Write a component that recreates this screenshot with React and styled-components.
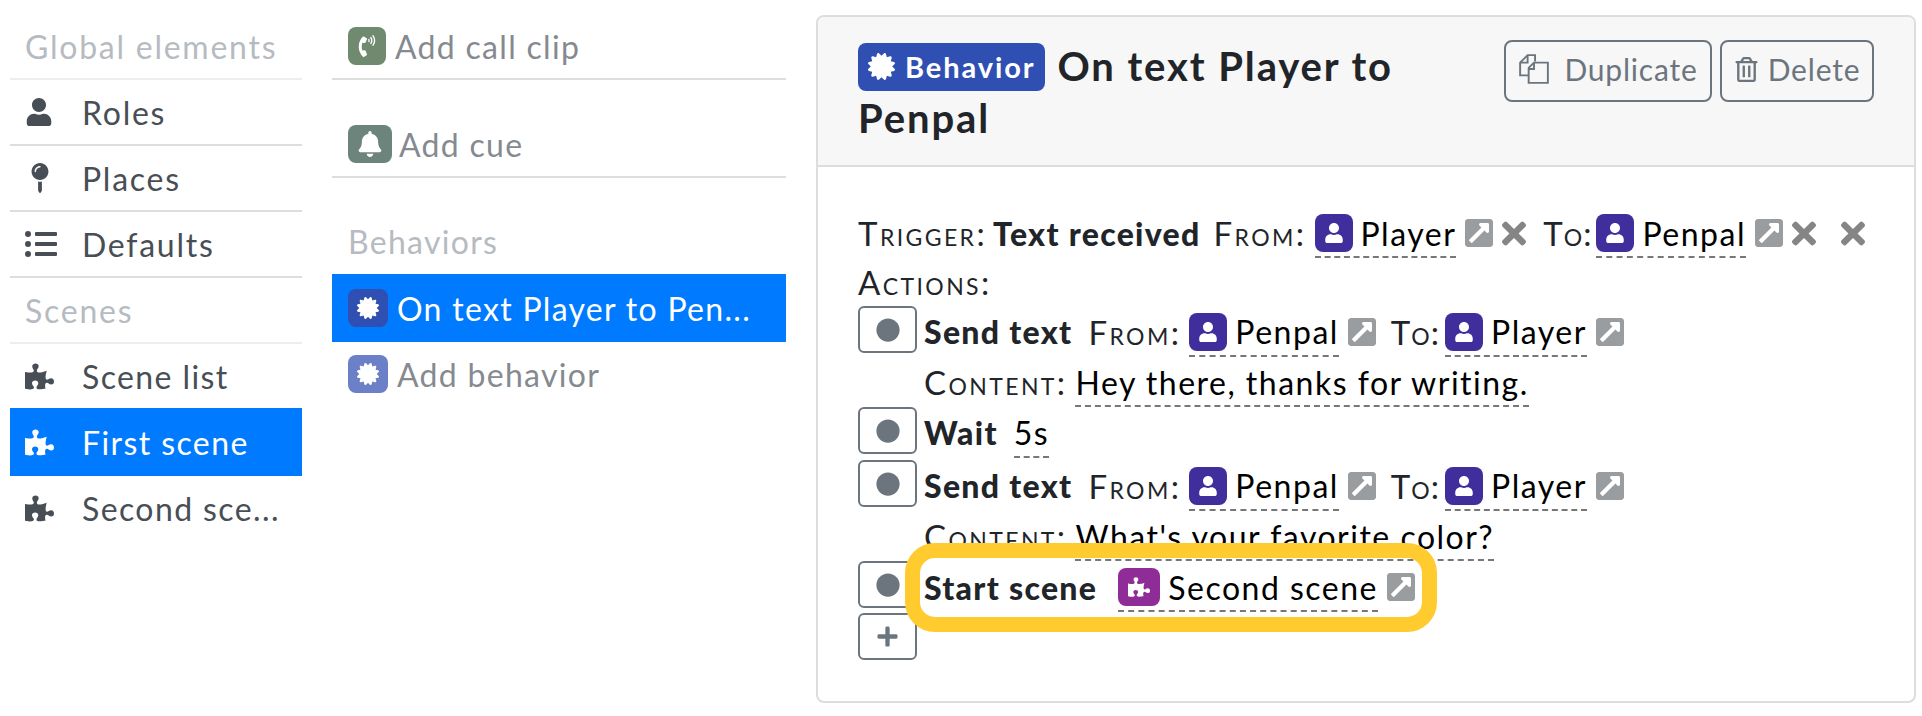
import React from "react";
import styled, { createGlobalStyle } from "styled-components";
import {
  FaUser,
  FaMapPin,
  FaListUl,
  FaPuzzlePiece,
  FaBell,
  FaCertificate,
  FaExternalLinkSquareAlt,
  FaTimes,
  FaPlus,
  FaCircle,
  FaRegTrashAlt,
  FaPhoneVolume,
} from "react-icons/fa";

const GlobalStyles = createGlobalStyle`
  body {
    margin: 0;
    background: #fff;
    font-family: Lato, "Liberation Sans", sans-serif;
    font-size: 32px;
    letter-spacing: 1.75px;
    color: #212529;
  }
`;

const Page = styled.div`
  display: flex;
  align-items: flex-start;
  width: 1922px;
  height: 716px;
  overflow: hidden;
  padding: 14px 0 0 10px;
  box-sizing: border-box;
`;

const NavColumn = styled.nav`
  width: 292px;
  flex: none;
`;

const AddColumn = styled.div`
  width: 454px;
  flex: none;
  margin-left: 30px;
  letter-spacing: 1.3px;
`;

const Heading = styled.div`
  display: flex;
  align-items: center;
  height: ${(p) => p.$height || 66}px;
  box-sizing: border-box;
  padding: ${(p) => p.$above || 0}px 0 0 ${(p) => p.$indent || 15}px;
  color: #b6bbc1;
  border-bottom: ${(p) => (p.$ruled ? "2px solid #eee" : "none")};
`;

const NavRow = styled.div`
  display: flex;
  align-items: center;
  height: 66px;
  box-sizing: border-box;
  padding: 0 0 ${(p) => (p.$ruled ? 0 : 2)}px 15px;
  color: ${(p) => (p.$active ? "#fff" : "#484e55")};
  background: ${(p) => (p.$active ? "#007bff" : "transparent")};
  box-shadow: ${(p) => (p.$active ? "0 -2px 0 #007bff" : "none")};
  border-bottom: ${(p) => (p.$ruled ? "2px solid #ddd" : "none")};
  letter-spacing: ${(p) => (p.$ruled ? 1.75 : 1.4)}px;
  white-space: nowrap;
`;

const NavIcon = styled.span`
  display: flex;
  width: 57px;
  flex: none;
  svg {
    width: auto;
    height: ${(p) => p.$size || 29}px;
  }
`;

const AddRow = styled.div`
  display: flex;
  align-items: center;
  height: ${(p) => p.$height || 66}px;
  box-sizing: border-box;
  padding-left: 16px;
  margin-bottom: ${(p) => p.$below || 0}px;
  color: ${(p) => (p.$active ? "#fff" : "#858a90")};
  background: ${(p) => (p.$active ? "#007bff" : "transparent")};
  border-bottom: ${(p) => (p.$ruled ? "2px solid #ddd" : "none")};
  white-space: nowrap;
`;

const ResourceIcon = styled.span`
  display: inline-flex;
  align-items: center;
  justify-content: center;
  flex: none;
  width: ${(p) => p.$width || 38}px;
  height: 38px;
  margin-right: ${(p) => p.$gap || 8}px;
  border-radius: 8px;
  background: ${(p) => p.$color};
  color: #fff;
  font-size: ${(p) => p.$size || 22}px;
`;

const Panel = styled.section`
  width: 1100px;
  height: 688px;
  flex: none;
  margin: 1px 0 0 30px;
  box-sizing: border-box;
  border: 2px solid #ddd;
  border-radius: 8px;
`;

const PanelHeader = styled.header`
  display: flex;
  justify-content: space-between;
  align-items: flex-start;
  height: 150px;
  box-sizing: border-box;
  padding: 23px 40px 0;
  background: #f7f7f7;
  border-bottom: 2px solid #ddd;
  border-radius: 6px 6px 0 0;
`;

const Title = styled.h2`
  width: 600px;
  margin: 0;
  font-size: 40px;
  font-weight: 700;
  line-height: 52px;
  letter-spacing: 1.9px;
  color: #212529;
`;

const Badge = styled.span`
  display: inline-flex;
  align-items: center;
  height: 48px;
  padding: 0 10px;
  margin-right: 12px;
  vertical-align: 1px;
  border-radius: 8px;
  background: #2f4fb3;
  color: #fff;
  font-size: 29px;
  letter-spacing: 1.9px;
  svg {
    font-size: 27px;
    margin-right: 10px;
  }
`;

const HeaderButtons = styled.div`
  display: flex;
  gap: 8px;
`;

const OutlineButton = styled.button`
  display: flex;
  align-items: center;
  justify-content: center;
  gap: ${(p) => p.$gap}px;
  width: ${(p) => p.$width}px;
  height: 62px;
  padding: 0 0 4px;
  background: transparent;
  border: 2px solid #6c757d;
  border-radius: 8px;
  color: #6c757d;
  font: inherit;
  font-size: 30px;
  letter-spacing: 0.8px;
`;

const PanelBody = styled.div`
  padding: 41px 40px 0;
  letter-spacing: 1.5px;
`;

const Line = styled.div`
  display: flex;
  align-items: center;
  height: ${(p) => p.$height || 50}px;
  white-space: nowrap;
`;

const Action = styled.div`
  display: grid;
  grid-template-columns: 59px 1fr;
  column-gap: 7px;
  margin-bottom: ${(p) => p.$below || 0}px;
  position: relative;
`;

const DragButton = styled.button`
  display: flex;
  justify-content: center;
  padding: 10px 0 0;
  width: ${(p) => p.$width || 59}px;
  height: 47px;
  box-sizing: border-box;
  background: #fff;
  border: 2px solid #6c757d;
  border-radius: 6px;
  color: #6c757d;
  font-size: 24px;
`;

const AddButton = styled(DragButton)`
  padding: 0;
  align-items: center;
  font-size: 23px;
`;

const Label = styled.span`
  font-variant: small-caps;
  font-size: 33px;
  letter-spacing: ${(p) => p.$spacing ?? 2.4}px;
  margin-right: ${(p) => p.$gap ?? 8}px;
  margin-left: ${(p) => p.$before || 0}px;
`;

const Strong = styled.strong`
  font-weight: 900;
  letter-spacing: 1.3px;
  margin-right: ${(p) => p.$gap || 0}px;
`;

const Editable = styled.span`
  display: inline-flex;
  align-items: center;
  height: 50px;
  box-sizing: border-box;
  padding-top: 2px;
  border-bottom: 2px dashed #777;
  color: #000;
`;

const LinkIcon = styled(FaExternalLinkSquareAlt)`
  flex: none;
  width: 32px;
  height: 32px;
  margin-left: 7px;
  color: #9a9d9f;
`;

const RemoveIcon = styled(FaTimes)`
  flex: none;
  width: 24px;
  height: 35px;
  margin-left: ${(p) => p.$before || 7}px;
  color: #858585;
`;

const Highlight = styled.div`
  position: absolute;
  left: 47px;
  top: -18px;
  width: 532px;
  height: 89px;
  box-sizing: border-box;
  border: 15px solid #ffcb2f;
  border-radius: 30px;
  pointer-events: none;
`;

const PURPLE = "#3f2e9c";

const Role = ({ name }) => (
  <Editable>
    <ResourceIcon $color={PURPLE} $size={20}>
      <FaUser />
    </ResourceIcon>
    {name}
  </Editable>
);

const SendText = ({ from, to, content, below }) => (
  <Action $below={below}>
    <DragButton>
      <FaCircle />
    </DragButton>
    <div>
      <Line $height={51}>
        <Strong $gap={16}>Send text</Strong>
        <Label>From:</Label>
        <Role name={from} />
        <LinkIcon />
        <Label $before={13} $spacing={1} $gap={5}>
          To:
        </Label>
        <Role name={to} />
        <LinkIcon />
      </Line>
      <Line>
        <Label>Content:</Label>
        <Editable>{content}</Editable>
      </Line>
    </div>
  </Action>
);

const App = () => {
  return (
    <>
      <GlobalStyles />
      <Page>
        <NavColumn>
          <Heading $ruled>Global elements</Heading>
          <NavRow $ruled>
            <NavIcon $size={28}>
              <FaUser />
            </NavIcon>
            Roles
          </NavRow>
          <NavRow $ruled>
            <NavIcon $size={30}>
              <FaMapPin />
            </NavIcon>
            Places
          </NavRow>
          <NavRow $ruled>
            <NavIcon $size={32}>
              <FaListUl />
            </NavIcon>
            Defaults
          </NavRow>
          <Heading $ruled>Scenes</Heading>
          <NavRow>
            <NavIcon>
              <FaPuzzlePiece />
            </NavIcon>
            Scene list
          </NavRow>
          <NavRow $active>
            <NavIcon>
              <FaPuzzlePiece />
            </NavIcon>
            First scene
          </NavRow>
          <NavRow>
            <NavIcon>
              <FaPuzzlePiece />
            </NavIcon>
            Second sce...
          </NavRow>
        </NavColumn>

        <AddColumn>
          <AddRow $ruled $below={32}>
            <ResourceIcon $color="#6f8a6e" $gap={9}>
              <FaPhoneVolume />
            </ResourceIcon>
            Add call clip
          </AddRow>
          <AddRow $ruled>
            <ResourceIcon $color="#6c847b" $width={44} $gap={7} $size={26}>
              <FaBell />
            </ResourceIcon>
            Add cue
          </AddRow>
          <Heading $height={96} $above={31} $indent={16}>
            Behaviors
          </Heading>
          <AddRow $active $height={68}>
            <ResourceIcon $color="#2f4fb3" $width={40} $gap={9}>
              <FaCertificate />
            </ResourceIcon>
            On text Player to Pen...
          </AddRow>
          <AddRow $height={64}>
            <ResourceIcon $color="#6b80c7" $width={40} $gap={9}>
              <FaCertificate />
            </ResourceIcon>
            Add behavior
          </AddRow>
        </AddColumn>

        <Panel>
          <PanelHeader>
            <Title>
              <Badge>
                <FaCertificate />
                Behavior
              </Badge>
              On text Player to Penpal
            </Title>
            <HeaderButtons>
              <OutlineButton $width={208} $gap={14}>
                <svg width="32" height="32" viewBox="0 0 30 30" fill="none" stroke="#6c757d" strokeWidth="1.8">
                  <path d="M10 21H2V9l7-7h7v6" />
                  <path d="M10 28V14l5-5h13v19z" />
                  <path d="M9 2v7H2M15 9v6h-5" />
                </svg>
                Duplicate
              </OutlineButton>
              <OutlineButton $width={154} $gap={9}>
                <FaRegTrashAlt size={25} />
                Delete
              </OutlineButton>
            </HeaderButtons>
          </PanelHeader>

          <PanelBody>
            <Line>
              <Label $gap={6}>Trigger:</Label>
              <Strong $gap={13}>Text received</Strong>
              <Label>From:</Label>
              <Role name="Player" />
              <LinkIcon />
              <RemoveIcon />
              <Label $before={17} $spacing={1} $gap={4}>
                To:
              </Label>
              <Role name="Penpal" />
              <LinkIcon />
              <RemoveIcon />
              <RemoveIcon $before={25} />
            </Line>
            <Line $height={48}>
              <Label>Actions:</Label>
            </Line>
            <SendText from="Penpal" to="Player" content="Hey there, thanks for writing." />
            <Action $below={2}>
              <DragButton>
                <FaCircle />
              </DragButton>
              <Line $height={51}>
                <Strong $gap={16}>Wait</Strong>
                <Editable>5s</Editable>
              </Line>
            </Action>
            <SendText from="Penpal" to="Player" content="What's your favorite color?" />
            <Action>
              <DragButton>
                <FaCircle />
              </DragButton>
              <Line $height={52}>
                <Strong $gap={21}>Start scene</Strong>
                <Editable>
                  <ResourceIcon $color="#8f2c98" $width={42}>
                    <FaPuzzlePiece />
                  </ResourceIcon>
                  Second scene
                </Editable>
                <LinkIcon />
              </Line>
              <Highlight />
            </Action>
            <AddButton $width={59}>
              <FaPlus />
            </AddButton>
          </PanelBody>
        </Panel>
      </Page>
    </>
  );
};

export default App;
